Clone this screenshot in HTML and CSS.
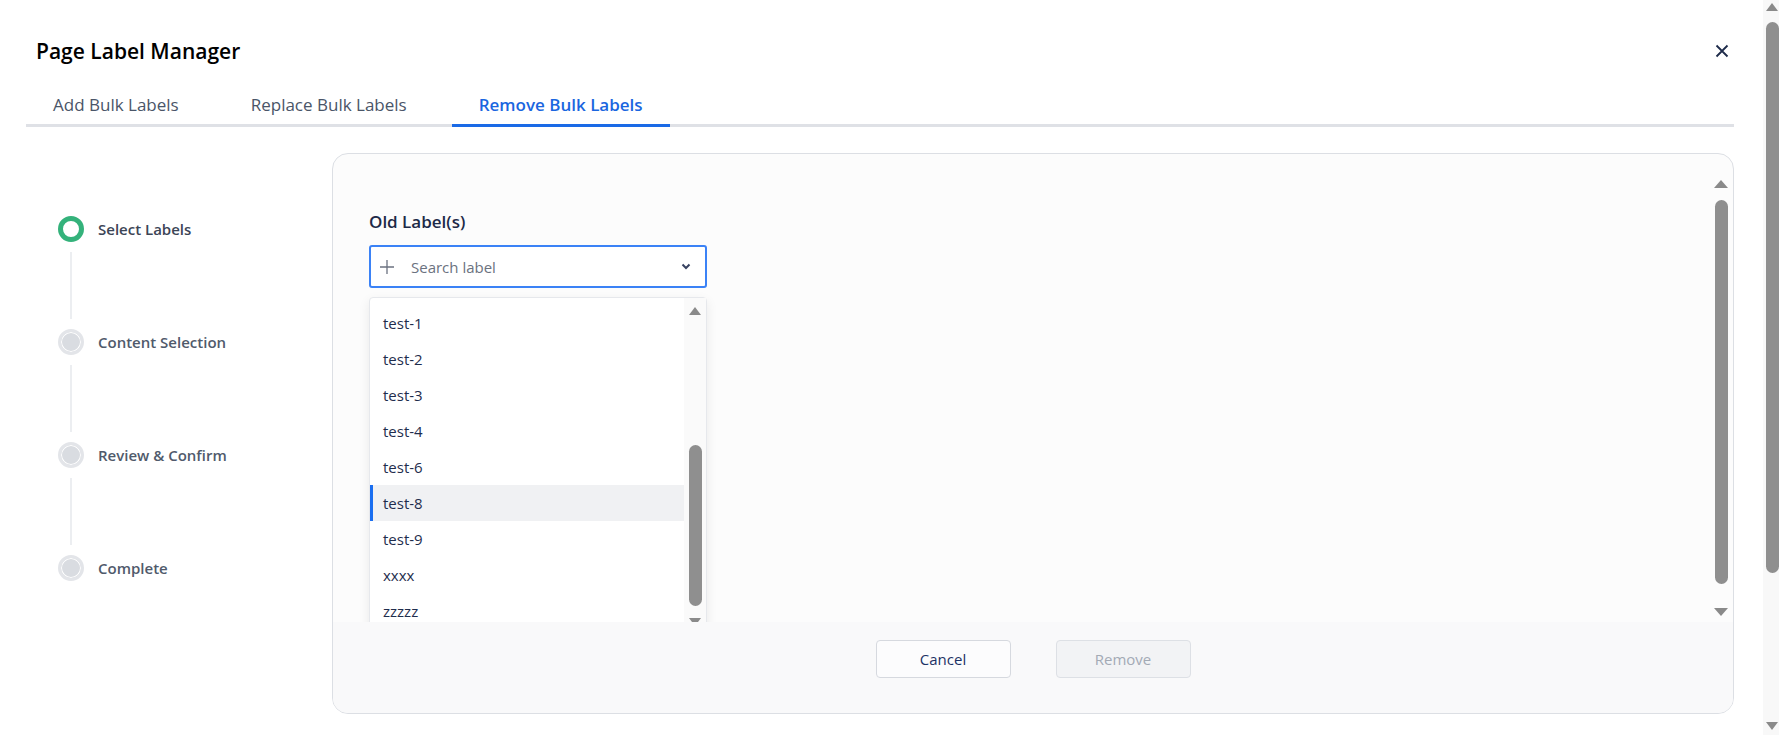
FILE: index.html
```html
<!DOCTYPE html>
<html lang="en">
<head>
    <meta charset="UTF-8">
    <meta name="viewport" content="width=device-width, initial-scale=1.0">
    <title>Page Label Manager</title>
    <link rel="stylesheet" href="styles.css">
</head>
<body>
    <div class="modal">
        <div class="header">
            <h2 class="title">Page Label Manager</h2>
            <button class="close" aria-label="Close">
                <svg width="14" height="14" viewBox="0 0 14 14"><path d="M1.5 1.5L12.5 12.5M12.5 1.5L1.5 12.5" stroke="#1e2b4a" stroke-width="1.8" fill="none"/></svg>
            </button>
        </div>

        <div class="tabs">
            <div class="tab">Add Bulk Labels</div>
            <div class="tab">Replace Bulk Labels</div>
            <div class="tab active">Remove Bulk Labels</div>
        </div>

        <div class="content">
            <div class="stepper">
                <div class="step current">
                    <span class="dot"></span>
                    <span class="step-label">Select Labels</span>
                </div>
                <div class="connector"></div>
                <div class="step">
                    <span class="dot"></span>
                    <span class="step-label">Content Selection</span>
                </div>
                <div class="connector"></div>
                <div class="step">
                    <span class="dot"></span>
                    <span class="step-label">Review &amp; Confirm</span>
                </div>
                <div class="connector"></div>
                <div class="step">
                    <span class="dot"></span>
                    <span class="step-label">Complete</span>
                </div>
            </div>

            <div class="card">
                <div class="card-body">
                    <label class="field-label">Old Label(s)</label>
                    <div class="select">
                        <div class="select-input">
                            <svg class="plus" width="16" height="16" viewBox="0 0 16 16"><path d="M8 1V15M1 8H15" stroke="#6b7280" stroke-width="1.3" fill="none"/></svg>
                            <span class="placeholder">Search label</span>
                            <svg class="chevron" width="10" height="7" viewBox="0 0 10 7"><path d="M1.5 1.5L5 5L8.5 1.5" stroke="#374261" stroke-width="2" fill="none"/></svg>
                        </div>
                        <div class="dropdown">
                            <ul class="options">
                                <li>test-1</li>
                                <li>test-2</li>
                                <li>test-3</li>
                                <li>test-4</li>
                                <li>test-6</li>
                                <li class="selected">test-8</li>
                                <li>test-9</li>
                                <li>xxxx</li>
                                <li>zzzzz</li>
                            </ul>
                            <div class="dd-scroll">
                                <span class="arrow up"></span>
                                <span class="dd-thumb"></span>
                                <span class="arrow down"></span>
                            </div>
                        </div>
                    </div>

                    <div class="card-scroll">
                        <span class="arrow up"></span>
                        <span class="card-thumb"></span>
                        <span class="arrow down"></span>
                    </div>
                </div>
                <div class="card-footer">
                    <button class="btn">Cancel</button>
                    <button class="btn disabled">Remove</button>
                </div>
            </div>
        </div>
    </div>

    <div class="page-scroll">
        <span class="arrow up"></span>
        <span class="page-thumb"></span>
        <span class="arrow down"></span>
    </div>
</body>
</html>
```

FILE: styles.css
```css
body {
    font-family: "Open Sans", "Noto Sans", sans-serif;
    margin: 0;
    padding: 0;
    background: #fff;
    overflow: hidden;
    height: 735px;
}

.modal {
    width: 1763px;
    box-sizing: border-box;
    padding: 0 29px 0 26px;
}

/* header */
.header {
    display: flex;
    justify-content: space-between;
    align-items: center;
    padding-top: 36px;
    height: 30px;
}

.title {
    margin: 0 0 0 10px;
    font-size: 21px;
    line-height: 30px;
    font-weight: 600;
    color: #000;
}

.close {
    border: none;
    background: none;
    padding: 0;
    margin-right: 5px;
    width: 14px;
    height: 14px;
    display: flex;
    cursor: pointer;
}

/* tabs */
.tabs {
    display: flex;
    gap: 18px;
    margin-top: 27px;
    border-bottom: 3px solid #dfe1e6;
}

.tab {
    padding: 0 27px 7px;
    font-size: 17px;
    line-height: 24px;
    color: #4a5568;
    margin-bottom: -3px;
    border-bottom: 3px solid transparent;
}

.tab.active {
    color: #1a66e0;
    font-weight: 600;
    border-bottom-color: #1a6ae6;
}

/* layout */
.content {
    display: flex;
    margin-top: 26px;
}

.stepper {
    width: 306px;
    flex-shrink: 0;
    padding: 63px 0 0 32px;
    box-sizing: border-box;
}

.step {
    display: flex;
    align-items: center;
    gap: 14px;
    height: 26px;
}

.dot {
    width: 26px;
    height: 26px;
    box-sizing: border-box;
    border-radius: 50%;
    border: 3px solid #e3e5e9;
    background: #d9dce1;
    box-shadow: inset 0 0 0 1px #fff;
}

.step.current .dot {
    border: 5px solid #34b27b;
    background: #fff;
    box-shadow: none;
}

.step-label {
    font-size: 15px;
    font-weight: 600;
    color: #505a6b;
}

.step.current .step-label {
    color: #3c4556;
}

.connector {
    width: 2px;
    height: 67px;
    margin: 10px 0 10px 12px;
    background: #eceef1;
}

/* card */
.card {
    flex: 1;
    height: 561px;
    box-sizing: border-box;
    border: 1px solid #dcdfe4;
    border-radius: 16px;
    overflow: hidden;
    background: #fcfcfc;
    display: flex;
    flex-direction: column;
}

.card-body {
    position: relative;
    height: 468px;
    overflow: hidden;
    padding: 56px 0 0 36px;
    box-sizing: border-box;
}

.field-label {
    display: block;
    font-size: 17px;
    line-height: 23px;
    font-weight: 600;
    color: #1d2a48;
    margin-bottom: 12px;
}

.select {
    position: relative;
    width: 338px;
}

.select-input {
    height: 43px;
    box-sizing: border-box;
    border: 2px solid #3b82f6;
    border-radius: 3px;
    background: #fff;
    display: flex;
    align-items: center;
    padding: 0 14px 0 8px;
}

.plus {
    margin-right: 16px;
}

.placeholder {
    flex: 1;
    font-size: 15px;
    color: #6b7280;
}

.dropdown {
    position: absolute;
    top: 52px;
    left: 0;
    width: 338px;
    height: 360px;
    box-sizing: border-box;
    background: #fff;
    border: 1px solid #e6e8ec;
    border-radius: 4px;
    box-shadow: 0 4px 12px rgba(0, 0, 0, 0.08);
    display: flex;
}

.options {
    list-style: none;
    margin: 0;
    padding: 7px 0 0;
    flex: 1;
}

.options li {
    height: 36px;
    line-height: 36px;
    padding-left: 13px;
    font-size: 15px;
    color: #1f2d4d;
}

.options li.selected {
    background: #f0f1f3;
    box-shadow: inset 3px 0 0 #1a6ef0;
}

.dd-scroll {
    width: 22px;
    background: #fafafa;
    display: flex;
    flex-direction: column;
    align-items: center;
}

.dd-thumb {
    width: 13px;
    height: 161px;
    margin-top: 130px;
    border-radius: 7px;
    background: #8f8f8f;
}

/* scrollbar arrows */
.arrow {
    width: 0;
    height: 0;
    border-left: 6px solid transparent;
    border-right: 6px solid transparent;
    display: block;
}

.arrow.up {
    border-bottom: 8px solid #8a8a8a;
}

.arrow.down {
    border-top: 8px solid #8a8a8a;
}

.dd-scroll .arrow.up {
    margin-top: 9px;
}

.dd-scroll .arrow.down {
    margin-top: 12px;
}

.card-scroll {
    position: absolute;
    top: 0;
    right: 5px;
    width: 14px;
    height: 100%;
    display: flex;
    flex-direction: column;
    align-items: center;
}

.card-scroll .arrow {
    border-left-width: 7px;
    border-right-width: 7px;
}

.card-scroll .arrow.up {
    margin-top: 26px;
}

.card-thumb {
    width: 13px;
    height: 384px;
    margin: 12px 0 24px;
    border-radius: 7px;
    background: #8f8f8f;
}

.card-footer {
    flex: 1;
    background: #f9f9fa;
    display: flex;
    justify-content: center;
    align-items: flex-start;
    gap: 45px;
    padding-top: 18px;
}

.btn {
    width: 135px;
    height: 38px;
    border: 1px solid #d6d9df;
    border-radius: 4px;
    background: #fcfcfd;
    font-family: inherit;
    font-size: 15px;
    color: #1d3266;
    cursor: pointer;
}

.btn.disabled {
    background: #f2f3f5;
    border-color: #dde0e5;
    color: #a3aab5;
    cursor: default;
}

/* page scrollbar */
.page-scroll {
    position: fixed;
    top: 0;
    right: 0;
    width: 16px;
    height: 100%;
    background: #f8f8f8;
    display: flex;
    flex-direction: column;
    align-items: flex-end;
}

.page-scroll .arrow {
    margin-right: 1px;
}

.page-scroll .arrow.up {
    margin-top: 3px;
}

.page-thumb {
    width: 13px;
    height: 551px;
    margin: 11px 0 149px;
    border-radius: 7px;
    background: #8f8f8f;
}
```
